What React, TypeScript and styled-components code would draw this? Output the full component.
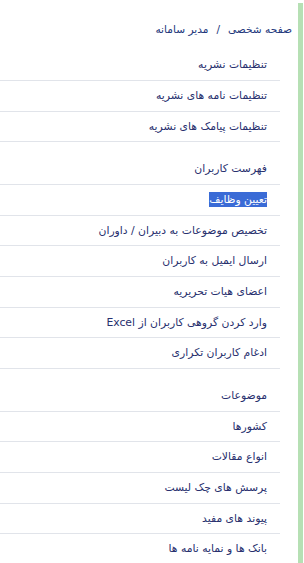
import React from "react";
import styled, { createGlobalStyle } from "styled-components";

const GlobalStyle = createGlobalStyle`
  html, body {
    margin: 0;
    padding: 0;
    background: #ffffff;
  }
  body {
    direction: rtl;
    font-family: "DejaVu Sans", "Noto Sans", sans-serif;
    overflow: hidden;
  }
`;

const Page = styled.div`
  display: flex;
  flex-direction: row;
  align-items: stretch;
  min-height: 563px;
`;

const Rail = styled.div`
  flex: 0 0 5px;
  margin-top: 3px;
  margin-right: 1px;
  background: #b6e0b4;
`;

const Content = styled.div`
  flex: 1;
  padding-top: 19px;
`;

const Breadcrumb = styled.div`
  padding-right: 6px;
  height: 20px;
  line-height: 20px;
  font-size: 10.6px;
  color: #23387c;
  white-space: nowrap;
`;

const Sep = styled.span`
  margin: 0 8px;
`;

const Menu = styled.ul`
  list-style: none;
  margin: 11.3px 18px 0 0;
  padding: 0;
  & + & {
    margin-top: 12px;
  }
`;

const Item = styled.li`
  padding: 5px 13px 5px 0;
  line-height: 19.67px;
  font-size: 10.8px;
  color: #28306e;
  border-bottom: 1px solid #e1e4ea;
  white-space: nowrap;
`;

const Selected = styled.span<{ $active?: boolean }>`
  background: ${(p) => (p.$active ? "#3a6bd6" : "transparent")};
  color: ${(p) => (p.$active ? "#ffffff" : "inherit")};
  padding: ${(p) => (p.$active ? "1px 0" : "0")};
`;

const sections: string[][] = [
  ["تنظیمات نشریه", "تنظیمات نامه های نشریه", "تنظیمات پیامک های نشریه"],
  [
    "فهرست کاربران",
    "تعیین وظایف",
    "تخصیص موضوعات به دبیران / داوران",
    "ارسال ایمیل به کاربران",
    "اعضای هیات تحریریه",
    "وارد کردن گروهی کاربران از Excel",
    "ادغام کاربران تکراری",
  ],
  [
    "موضوعات",
    "کشورها",
    "انواع مقالات",
    "پرسش های چک لیست",
    "پیوند های مفید",
    "بانک ها و نمایه نامه ها",
  ],
];

export default function App() {
  return (
    <>
      <GlobalStyle />
      <Page>
        <Rail />
        <Content>
          <Breadcrumb>
            صفحه شخصی<Sep>/</Sep>مدیر سامانه
          </Breadcrumb>
          {sections.map((items, i) => (
            <Menu key={i}>
              {items.map((t) => (
                <Item key={t}>
                  <Selected $active={t === "تعیین وظایف"}>{t}</Selected>
                </Item>
              ))}
            </Menu>
          ))}
        </Content>
      </Page>
    </>
  );
}
